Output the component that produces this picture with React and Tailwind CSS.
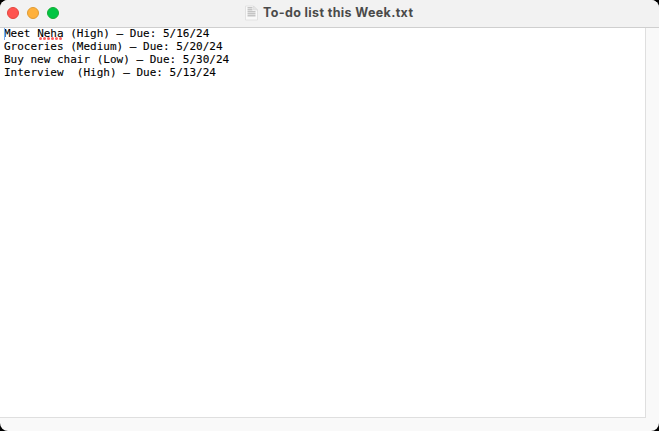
const tasks = [
  'Groceries (Medium) – Due: 5/20/24',
  'Buy new chair (Low) – Due: 5/30/24',
  'Interview  (High) – Due: 5/13/24',
];

function WindowControls() {
  return (
    <div className="flex w-[244px] shrink-0 gap-2 pl-[7px]">
      <span className="size-3 rounded-full border-[0.5px] border-[#e2463f] bg-[#ff5450]" />
      <span className="size-3 rounded-full border-[0.5px] border-[#df9b34] bg-[#ffb13c]" />
      <span className="size-3 rounded-full border-[0.5px] border-[#16ab35] bg-[#00c543]" />
    </div>
  );
}

function DocumentIcon() {
  return (
    <svg className="h-4 w-[15px] shrink-0" viewBox="0 0 15 16" fill="none">
      <path d="M1.5 1h8L13.5 5V15h-12z" fill="#f9f9f9" stroke="#e0e0e0" strokeWidth="0.9" />
      <path d="M9.5 1v4h4z" fill="#e5e5e5" stroke="#d5d5d5" strokeWidth="0.5" />
      <path d="M3.5 2.8h5M3.5 4.8h5M3.5 6.8h8M3.5 8.8h8M3.5 10.8h8" stroke="#c4c4c4" strokeWidth="1.4" />
    </svg>
  );
}

export default function App() {
  return (
    <div className="h-[431px] w-[659px] overflow-hidden bg-black">
      <div className="flex h-full flex-col overflow-hidden rounded-[8px] bg-[#f9f9f9]">
        <header className="flex h-7 shrink-0 items-center border-b border-[#cfcfcf] bg-[#f2f2f2] pb-px">
          <WindowControls />
          <DocumentIcon />
          <h1 className="ml-1 whitespace-nowrap font-['Inter',sans-serif] text-[12.5px] leading-4 font-bold tracking-[0.36px] text-[#4a4a4a]">
            To-do list this Week.txt
          </h1>
        </header>
        <main className="h-[390px] w-[646px] shrink-0 border-r border-b border-[#dfdfdf] bg-white pl-1 font-['DejaVu_Sans_Mono',monospace] text-[11px] leading-[13px] whitespace-pre text-black [-webkit-text-stroke:0.1px_black]">
          <div className="relative -mt-px">
            <span className="absolute top-px left-0 h-3 w-px bg-[#79adf0]" />
            Meet{' '}
            <span className="relative inline-block">
              Neha
              <svg className="absolute top-[10px] left-[1px] h-[3px] w-[26px]" viewBox="0 0 26 3">
                <path d="M2.5 1.5H25" stroke="#ff5f60" strokeWidth="3" strokeLinecap="round" strokeDasharray="0 4" />
              </svg>
            </span>
            {' (High) – Due: 5/16/24'}
          </div>
          {tasks.map((task) => (
            <div key={task}>{task}</div>
          ))}
        </main>
      </div>
    </div>
  );
}
